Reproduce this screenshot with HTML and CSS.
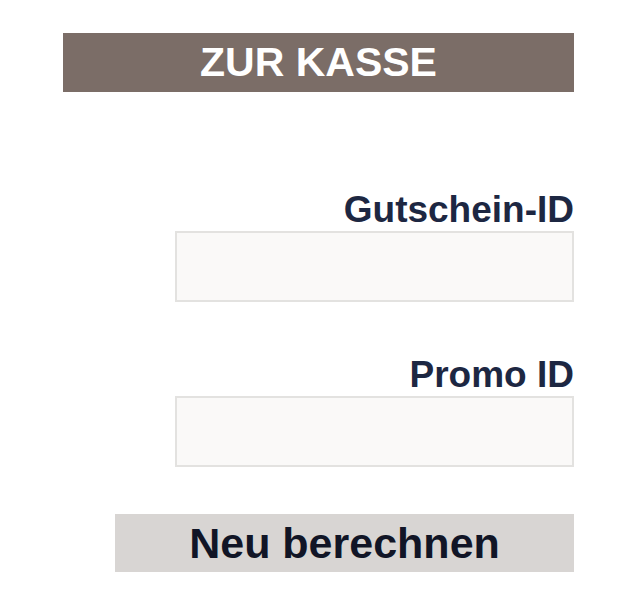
FILE: index.html
```html
<!DOCTYPE html>
<html lang="de">
<head>
  <meta charset="UTF-8" />
  <title>Zur Kasse</title>
  <link rel="stylesheet" href="styles.css">
</head>
<body>
<div class="checkout">
  <div class="title">ZUR KASSE</div>

  <div class="field first">
    <label for="voucher">Gutschein-ID</label>
    <input type="text" id="voucher" />
  </div>

  <div class="field">
    <label for="promo">Promo ID</label>
    <input type="text" id="promo" />
  </div>

  <button class="recalc">Neu berechnen</button>
</div>
</body>
</html>
```

FILE: styles.css
```css
body { margin: 0; background: #fff; font-family: "Liberation Sans", Arial, sans-serif; }
.checkout { width: 511px; margin-left: 63px; padding-top: 33px; }
.title { height: 59px; line-height: 59px; background: #7b6d67; color: #fff; text-align: center; font-size: 41px; font-weight: bold; }
.field { margin-left: 112px; margin-top: 54px; }
.field.first { margin-top: 99px; }
.field label { display: block; text-align: right; font-size: 37px; line-height: 37px; font-weight: bold; color: #1d2742; margin-bottom: 3px; }
.field input { display: block; box-sizing: border-box; width: 100%; height: 71px; margin: 0; background: #faf9f8; border: 2px solid #e3e2e0; padding: 0 10px; }
.recalc { display: block; box-sizing: border-box; width: 459px; height: 58px; margin: 47px 0 0 52px; padding: 1px 0 0; border: none; background: #d8d5d3; color: #111526; font-family: inherit; font-size: 43px; line-height: 57px; font-weight: bold; cursor: pointer; }
```
